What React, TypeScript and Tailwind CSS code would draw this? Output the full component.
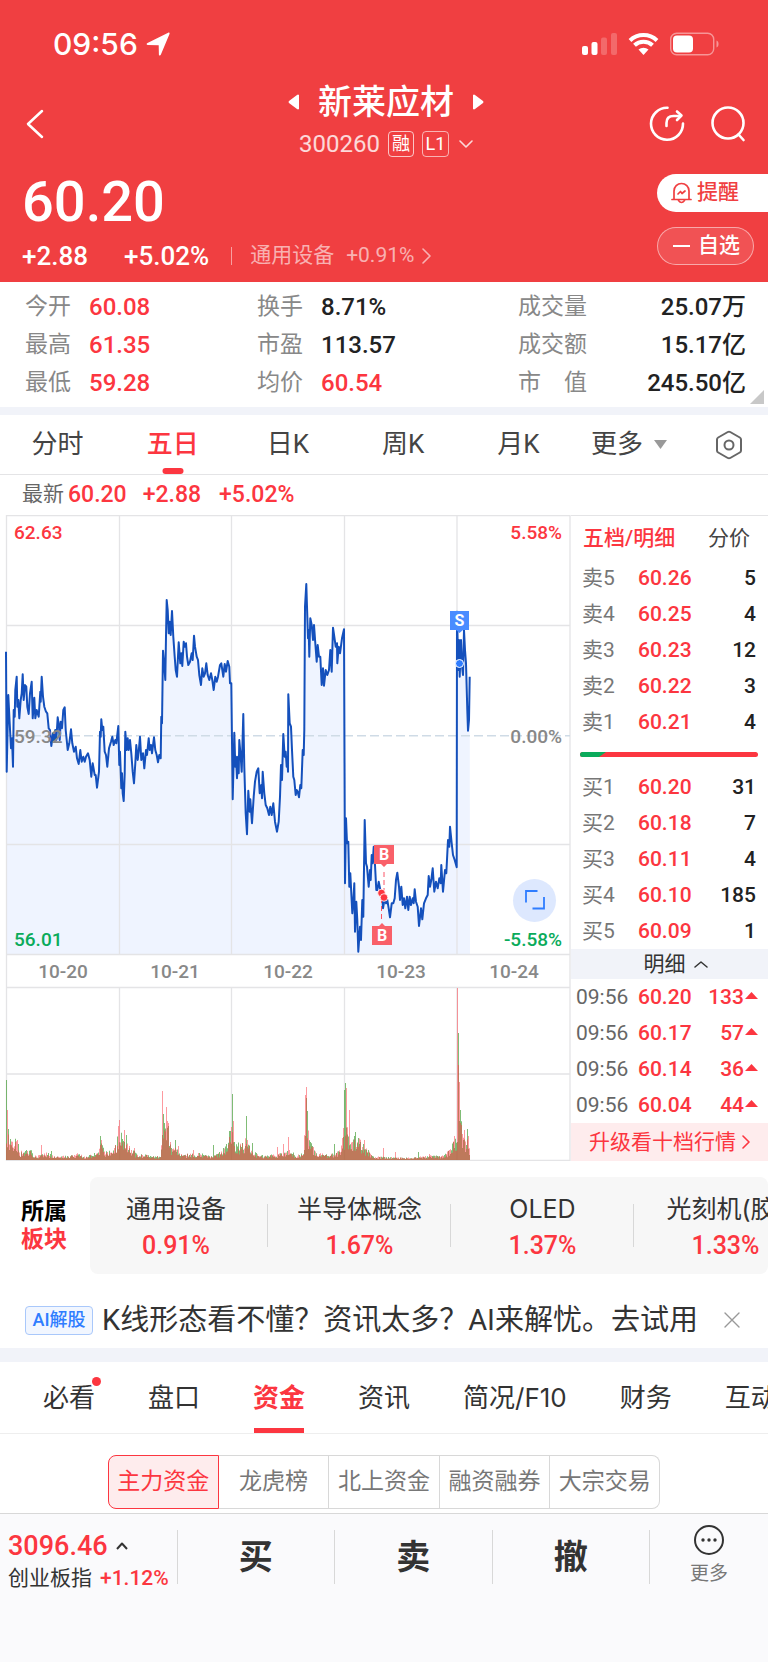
const klineTabs = ['分时', '五日', '日K', '周K', '月K'];

const stats = [
  [
    { label: '今开', value: '60.08', up: true },
    { label: '最高', value: '61.35', up: true },
    { label: '最低', value: '59.28', up: true },
  ],
  [
    { label: '换手', value: '8.71%', up: false },
    { label: '市盈', value: '113.57', up: false },
    { label: '均价', value: '60.54', up: true },
  ],
  [
    { label: '成交量', value: '25.07万', up: false },
    { label: '成交额', value: '15.17亿', up: false },
    { label: '市　值', value: '245.50亿', up: false },
  ],
];

const sells = [
  ['卖5', '60.26', '5'],
  ['卖4', '60.25', '4'],
  ['卖3', '60.23', '12'],
  ['卖2', '60.22', '3'],
  ['卖1', '60.21', '4'],
];

const buys = [
  ['买1', '60.20', '31'],
  ['买2', '60.18', '7'],
  ['买3', '60.11', '4'],
  ['买4', '60.10', '185'],
  ['买5', '60.09', '1'],
];

const deals = [
  ['09:56', '60.20', '133'],
  ['09:56', '60.17', '57'],
  ['09:56', '60.14', '36'],
  ['09:56', '60.04', '44'],
];

const sectors = [
  { name: '通用设备', change: '0.91%' },
  { name: '半导体概念', change: '1.67%' },
  { name: 'OLED', change: '1.37%' },
  { name: '光刻机(胶)', change: '1.33%' },
];

const infoTabs = ['必看', '盘口', '资金', '资讯', '简况/F10', '财务', '互动'];
const fundTabs = ['主力资金', '龙虎榜', '北上资金', '融资融券', '大宗交易'];

// 五日分时走勢，單位為 1/3 px
const trend =
  '18,425 20,785 25,555 29,640 33,715 36,685 39,770 41,600 44,620 46,540 50,500 52,590 55,570 58,625 62,570 65,550 68,493 71,570 75,525 79,530 82,590 86,612 90,550 95,515 98,625 103,563 106,625 110,600 116,620 121,545 122,575 125,500 129,560 133,590 138,605 142,610 146,655 150,660 154,708 159,670 162,690 166,660 169,690 173,622 177,650 179,690 182,635 186,655 190,600 194,592 197,660 203,720 208,700 213,658 217,700 222,725 227,710 231,745 236,762 241,720 245,755 250,740 254,755 258,740 264,730 269,750 274,800 278,760 284,795 287,795 291,833 297,785 300,665 302,680 304,628 307,660 310,650 314,725 318,735 322,770 327,715 333,695 337,680 341,705 346,690 349,700 355,648 358,765 360,725 364,835 366,790 368,850 371,873 374,790 376,665 380,720 383,685 386,720 390,690 394,730 398,785 402,820 406,760 409,705 413,750 416,725 420,680 424,750 429,730 433,775 438,720 441,735 446,685 449,720 453,705 456,730 462,682 466,720 470,735 474,757 478,735 482,745 484,620 486,640 489,422 493,470 496,510 498,380 500,270 503,300 506,370 509,335 512,375 516,303 520,380 524,440 527,480 531,500 536,397 541,460 544,430 547,468 551,395 554,410 558,400 561,440 565,465 570,455 575,430 578,450 582,377 585,410 590,440 594,450 598,495 603,525 607,475 611,500 615,490 619,460 623,495 628,510 633,490 637,510 641,540 646,500 650,515 654,500 660,465 664,460 670,500 674,462 678,485 683,453 688,470 690,520 694,520 698,868 703,668 706,770 708,740 711,805 714,740 716,790 718,690 722,740 725,785 730,612 733,770 737,910 741,973 745,842 749,905 751,868 756,940 761,860 765,815 770,785 775,775 779,850 784,825 786,865 788,785 793,850 797,885 802,895 807,915 811,890 815,915 820,880 825,935 831,965 836,935 840,860 843,765 846,810 850,672 854,740 857,725 860,770 862,740 864,785 865,553 869,640 873,650 876,720 880,800 883,810 887,855 890,840 893,845 897,862 901,825 904,835 908,720 911,735 913,660 915,290 919,222 921,290 924,385 926,360 928,440 931,325 935,345 939,390 942,345 946,400 950,455 953,405 957,440 961,440 965,525 969,475 972,527 977,480 982,495 987,480 991,420 995,485 999,353 1003,380 1007,410 1011,400 1012,460 1016,410 1020,430 1026,385 1032,358 1035,1120 1038,925 1041,1000 1045,995 1048,1130 1051,1090 1057,1210 1060,1175 1063,1120 1065,1265 1069,1175 1072,1230 1075,1325 1080,1250 1083,1290 1087,1170 1090,1220 1094,930 1098,1060 1101,1070 1106,1130 1110,1080 1112,1110 1115,1035 1118,1060 1121,1010 1125,1065 1129,1140 1132,1140 1136,1115 1142,1145 1146,1150 1149,1195 1155,1160 1158,1180 1162,1170 1166,1195 1170,1222 1175,1180 1180,1180 1184,1165 1188,1110 1192,1088 1197,1130 1200,1170 1204,1130 1208,1185 1212,1165 1216,1195 1221,1160 1225,1200 1229,1160 1233,1185 1238,1165 1241,1180 1244,1138 1248,1175 1253,1190 1257,1248 1263,1195 1267,1228 1272,1180 1278,1165 1283,1155 1286,1098 1290,1130 1294,1110 1298,1075 1303,1145 1308,1115 1313,1135 1318,1105 1322,1120 1324,1065 1329,1145 1335,1080 1339,1090 1344,990 1348,1010 1350,950 1355,1000 1359,1035 1364,1050 1370,1072 1371,305 1373,400 1375,480 1377,390 1379,500 1383,390 1386,470 1389,495 1392,360 1395,420 1398,460 1402,600 1404,662 1407,630 1409,500';

// 成交量輪廓 [x, 高度]
const volumeBase: [number, number][] = [
  [6, 30], [9, 24], [12, 16], [17, 20], [20, 8], [30, 9], [36, 4], [46, 7], [55, 3], [70, 4], [78, 6], [84, 3],
  [97, 7], [101, 20], [104, 8], [112, 9], [117, 20], [121, 24], [126, 20], [131, 9], [140, 5], [160, 3], [162, 25],
  [164, 36], [166, 20], [168, 34], [171, 12], [176, 12], [180, 5], [200, 6], [212, 3], [218, 6], [227, 14], [231, 30],
  [234, 20], [239, 14], [247, 20], [250, 9], [260, 4], [275, 5], [291, 9], [295, 4], [303, 6], [305, 50], [308, 28],
  [311, 14], [316, 6], [330, 5], [340, 9], [343, 20], [346, 40], [350, 18], [356, 22], [363, 14], [369, 7], [373, 3],
  [410, 2], [430, 4], [443, 4], [450, 10], [456, 22], [459, 50], [462, 26], [466, 18], [468, 20], [470, 6],
];

const volumeSpikes: [number, number, string][] = [
  [6, 80, 'g'], [7, 50, 'r'], [8, 26, 'g'], [41, 15, 'r'], [51, 9, 'g'], [100, 24, 'g'], [101, 20, 'r'],
  [118, 34, 'r'], [119, 40, 'r'], [124, 30, 'r'], [126, 25, 'g'], [134, 12, 'r'], [162, 69, 'r'], [163, 46, 'g'],
  [164, 37, 'g'], [166, 53, 'r'], [167, 39, 'r'], [168, 34, 'g'], [175, 20, 'g'], [178, 14, 'r'], [193, 10, 'r'],
  [213, 15, 'g'], [226, 16, 'g'], [229, 29, 'g'], [231, 33, 'r'], [232, 66, 'g'], [233, 39, 'r'], [246, 44, 'g'],
  [247, 20, 'r'], [252, 17, 'g'], [277, 13, 'r'], [283, 16, 'r'], [288, 23, 'r'], [305, 65, 'r'], [306, 73, 'r'],
  [306, 62, 'g'], [307, 49, 'g'], [308, 26, 'r'], [310, 18, 'g'], [313, 13, 'r'], [334, 16, 'g'], [342, 22, 'r'],
  [343, 32, 'r'], [344, 70, 'g'], [345, 77, 'g'], [346, 72, 'r'], [349, 50, 'r'], [355, 28, 'g'], [358, 22, 'g'],
  [364, 20, 'r'], [368, 10, 'g'], [383, 12, 'r'], [395, 8, 'r'], [418, 8, 'g'], [429, 6, 'r'], [454, 24, 'r'],
  [457, 172, 'r'], [458, 127, 'g'], [458, 95, 'r'], [459, 78, 'r'], [460, 50, 'g'], [461, 35, 'r'], [464, 30, 'r'],
  [467, 31, 'g'], [468, 24, 'r'],
];

const points = trend.split(' ').map((p) => {
  const [x, y] = p.split(',').map(Number);
  return `${(x / 3).toFixed(1)},${(510 + y / 3).toFixed(1)}`;
});

const noise = (n: number) => {
  const v = Math.sin(n * 127.1) * 43758.5453;
  return v - Math.floor(v);
};

const baseHeight = (x: number) => {
  const i = volumeBase.findIndex(([bx]) => bx > x);
  if (i < 1) return volumeBase[volumeBase.length - 1][1];
  const [x0, h0] = volumeBase[i - 1];
  const [x1, h1] = volumeBase[i];
  return h0 + ((h1 - h0) * (x - x0)) / (x1 - x0);
};

const volumePath = (color: string) => {
  const seed = color === 'r' ? 3 : 900;
  let d = '';
  for (let x = 6; x < 470; x++) {
    const h = Math.max(1, baseHeight(x) * (0.35 + 0.85 * noise(x + seed)));
    d += `M${x} 1160v-${h.toFixed(1)}h1V1160z`;
  }
  volumeSpikes.filter((s) => s[2] === color).forEach(([x, h]) => {
    d += `M${x} 1160v-${h}h1V1160z`;
  });
  return d;
};

function StatusBar() {
  return (
    <div className="flex items-center justify-between pl-[53px] pr-[49px] pt-7">
      <div className="flex items-center gap-2">
        <span className="font-['Inter','Liberation_Sans',sans-serif] text-[30px] font-medium leading-8">09:56</span>
        <svg className="h-6 w-6" viewBox="0 0 24 24" fill="currentColor">
          <path d="M22.2.7c.9-.5 1.7.2 1.3 1.2L14.8 22.700c-.5 1.200-1.900 1-1.900-.3l-.2-9.100-10.800-.4c-1.500-.1-1.700-1.400-.4-2z" />
        </svg>
      </div>
      <svg className="h-6 w-[137px]" viewBox="0 0 137 24" fill="none">
        <rect x="0" y="14" width="6" height="9" rx="2" fill="#fff" />
        <rect x="9.500" y="10" width="6" height="13" rx="2" fill="#fff" />
        <rect x="19" y="5.500" width="6" height="17.500" rx="2" fill="#fff" fillOpacity=".22" />
        <rect x="29" y="1" width="6" height="22" rx="2" fill="#fff" fillOpacity=".22" />
        <g stroke="#fff" strokeWidth="4">
          <path d="M48 8.500a19.500 19.500 0 0 1 27 0" />
          <path d="M52.500 13.300a13 13 0 0 1 18 0" />
        </g>
        <path d="M56.500 17.600a7.500 7.500 0 0 1 10 0l-5 5.400z" fill="#fff" />
        <rect x="88.700" y="1.200" width="43" height="21.500" rx="6" stroke="#fff" strokeOpacity=".45" strokeWidth="1.400" />
        <path d="M134.500 8.500c2.700.8 2.700 6.200 0 7z" fill="#fff" fillOpacity=".45" />
        <rect x="91" y="3.500" width="20" height="17" rx="4" fill="#fff" />
      </svg>
    </div>
  );
}

function Header() {
  return (
    <header className="bg-[#f03f41] pb-[10px] text-white">
      <StatusBar />
      <div className="grid grid-cols-[1fr_auto_1fr] items-center pl-[26px] pr-[22px] pt-[22px]">
        <button aria-label="返回" className="justify-self-start">
          <svg className="h-[30px] w-[18px]" viewBox="0 0 18 30" fill="none" stroke="currentColor" strokeWidth="2.500" strokeLinecap="round" strokeLinejoin="round">
            <path d="M16 2 2 15l14 13" />
          </svg>
        </button>
        <div className="flex flex-col items-center">
          <div className="flex items-center gap-[18px]">
            <button aria-label="上一只">
              <svg className="h-4 w-3" viewBox="0 0 12 16" fill="currentColor"><path d="M11 1v14q-1 .8-2 0L1 9Q0 8 1 7l8-6q1-.8 2 0z" /></svg>
            </button>
            <h1 className="text-[34px] font-medium leading-10">新莱应材</h1>
            <button aria-label="下一只">
              <svg className="h-4 w-3" viewBox="0 0 12 16" fill="currentColor"><path d="M1 1v14q1 .8 2 0l8-6q1-1 0-2L3 1Q2 .2 1 1z" /></svg>
            </button>
          </div>
          <div className="flex h-11 items-center gap-2 text-white/80">
            <span className="text-2xl">300260</span>
            <span className="flex h-[26px] w-[26px] items-center justify-center rounded border border-white/70 text-lg leading-none text-white">融</span>
            <span className="flex h-[26px] w-[27px] items-center justify-center rounded border border-white/60 text-lg leading-none text-white">L1</span>
            <button aria-label="展开" className="ml-0.5">
              <svg className="h-2 w-3.5" viewBox="0 0 14 8" fill="none" stroke="currentColor" strokeWidth="1.600" strokeLinecap="round" strokeLinejoin="round"><path d="m1 1 6 6 6-6" /></svg>
            </button>
          </div>
        </div>
        <div className="flex items-center gap-[25px] justify-self-end">
          <button aria-label="分享">
            <svg className="h-9 w-9" viewBox="0 0 36 36" fill="none" stroke="currentColor" strokeWidth="2.600" strokeLinecap="round" strokeLinejoin="round">
              <path d="M18.500 1.800A16 16 0 1 0 34 17.500" />
              <path d="M17.500 20v-3q0-7 7-7h6" />
              <path d="m28 5.500 4.500 4-4.500 4.500" />
            </svg>
          </button>
          <button aria-label="搜索">
            <svg className="h-9 w-9" viewBox="0 0 36 36" fill="none" stroke="currentColor" strokeWidth="2.600" strokeLinecap="round">
              <circle cx="18" cy="17" r="15.500" />
              <path d="m28.500 28.500 5 5.500" />
            </svg>
          </button>
        </div>
      </div>
      <div className="flex items-start justify-between pl-[22px]">
        <div>
          <div className="pt-1.5 text-[56px] font-medium leading-[60px]">60.20</div>
          <div className="mt-2 flex h-8 items-center text-[26px] font-medium">
            <span>+2.88</span>
            <span className="ml-9">+5.02%</span>
            <span className="ml-[22px] mr-[18px] h-[18px] w-px bg-white/50" />
            <a href="#sector" className="flex items-center gap-3 text-[21px] font-normal text-white/60">
              <span>通用设备</span>
              <span>+0.91%</span>
              <svg className="-ml-1 h-4 w-[9px]" viewBox="0 0 9 16" fill="none" stroke="currentColor" strokeWidth="1.600" strokeLinecap="round" strokeLinejoin="round"><path d="m1 1 7 7-7 7" /></svg>
            </a>
          </div>
        </div>
        <div className="flex w-[111px] flex-col gap-[15px] pt-2">
          <button className="flex h-[38px] items-center rounded-l-full bg-white pl-[14px] text-[21px] font-medium text-[#f03f41]">
            <svg className="mr-[5px] h-[22px] w-[21px]" viewBox="0 0 21 22" fill="none" stroke="currentColor" strokeWidth="1.700" strokeLinecap="round" strokeLinejoin="round">
              <path d="M1 17.500h19M3 17.500V9a7.500 7.500 0 0 1 15 0v8.500" />
              <path d="M7.500 18.500q3 4 6 0" />
              <path d="m7 12 2.500-2.500 1.500 2L14 9" />
            </svg>
            提醒
          </button>
          <button className="mr-[14px] flex h-[38px] items-center rounded-full border border-white/50 bg-white/10 pl-[15px] text-[21px] font-medium">
            <span className="mr-2 h-0.5 w-[17px] bg-white" />
            自选
          </button>
        </div>
      </div>
    </header>
  );
}

function PriceChart() {
  const area = `6,954 ${points.join(' ')} 470,954`;
  return (
    <div className="relative min-w-0 flex-1">
      <svg className="block w-full" viewBox="0 515 571 646" fontFamily="Roboto, sans-serif" fontWeight="500">
        <polygon points={area} fill="#eff4ff" />
        <g stroke="#e4e4e6" strokeWidth="1.300" fill="none">
          <path d="M6 515.500h564M6 625.500h564M6 844.500h564M6 954.500h564M6 987.500h564M6 1074h564M6 1160.400h564" />
          <path d="M6.500 515v646M119.500 515v439M231.500 515v439M344.500 515v439M457 515v439M119.500 987v173M231.500 987v173M344.500 987v173M457 987v173M570 515v646" />
        </g>
        <path d="M6 735.700h564" stroke="#cfdbe6" strokeWidth="1.500" strokeDasharray="9 4" />
        <polyline points={points.join(' ')} fill="none" stroke="#1450bc" strokeWidth="2" strokeLinejoin="round" />
        <path d={volumePath('g')} fill="#3c9a2c" fillOpacity=".65" />
        <path d={volumePath('r')} fill="#fc3640" fillOpacity=".5" />

        <g fontSize="19">
          <text x="14" y="539" fill="#fc3640">62.63</text>
          <text x="14" y="743" fill="#888">59.32</text>
          <text x="14" y="946" fill="#0aab5b">56.01</text>
          <text x="562" y="539" fill="#fc3640" textAnchor="end">5.58%</text>
          <text x="562" y="743" fill="#888" textAnchor="end">0.00%</text>
          <text x="562" y="946" fill="#0aab5b" textAnchor="end">-5.58%</text>
        </g>
        <g fontSize="19" fill="#888" textAnchor="middle">
          <text x="63" y="978">10-20</text>
          <text x="175" y="978">10-21</text>
          <text x="288" y="978">10-22</text>
          <text x="401" y="978">10-23</text>
          <text x="514" y="978">10-24</text>
        </g>

        <g stroke="#fb5566" strokeDasharray="5 3">
          <path d="M384 872v20M381.500 898v24" />
        </g>
        <g fill="#f96069">
          <path d="M374 845h20v19h-7l-3 3-3-3h-7zM372 945h20v-19h-7l-3-3-3 3h-7z" />
        </g>
        <g fill="#fc3640" stroke="#fff" strokeWidth=".8">
          <circle cx="381.500" cy="893" r="3.800" />
          <circle cx="384" cy="897.500" r="3.800" />
        </g>
        <path d="M450 611h19v19h-6l-3.500 3-3.500-3h-6z" fill="#4a8cff" />
        <circle cx="459.500" cy="663.500" r="4" fill="#2f7dff" stroke="#fff" strokeWidth="1" />
        <g fontSize="16" fontWeight="700" fill="#fff" textAnchor="middle">
          <text x="384" y="860">B</text>
          <text x="382" y="941">B</text>
          <text x="459.500" y="626">S</text>
        </g>
      </svg>
      <button aria-label="全屏" className="absolute bottom-[37%] right-[15px] flex h-[43px] w-[43px] items-center justify-center rounded-full bg-[#dde8fe]">
        <svg className="h-5 w-5" viewBox="0 0 20 20" fill="none" stroke="#2f7dff" strokeWidth="1.800">
          <path d="M1 12.500V1h11.500M7.500 18.500H19V7" />
        </svg>
      </button>
    </div>
  );
}

function QuoteRows({ rows }: { rows: string[][] }) {
  return (
    <table className="w-full table-fixed">
      <tbody>
        {rows.map(([level, price, amount]) => (
          <tr key={level} className="h-9">
            <td className="w-[56px] p-0 pl-[11px] text-[#777]">{level}</td>
            <td className="w-[70px] p-0 pl-[11px] font-medium text-[#fc3640]">{price}</td>
            <td className="p-0 pr-3 text-right font-medium text-[#222]">{amount}</td>
          </tr>
        ))}
      </tbody>
    </table>
  );
}

function OrderBook() {
  return (
    <aside className="w-[197px] shrink-0 border-t border-[#e4e4e6] text-[21px] leading-6">
      <div className="flex h-11 items-center justify-between pl-3 pr-[18px]">
        <button className="font-medium text-[#fc3640]">五档/明细</button>
        <button className="text-[#444]">分价</button>
      </div>
      <QuoteRows rows={sells} />
      <div className="flex h-[29px] items-center pl-[9px] pr-2.5">
        <div className="flex h-[5px] w-full overflow-hidden rounded-full bg-[#fc3640]">
          <svg className="h-full w-[26px]" viewBox="0 0 26 5" fill="#0aab5b"><path d="M0 0h26l-7 5H0z" /></svg>
        </div>
      </div>
      <QuoteRows rows={buys} />
      <button className="flex h-[30px] w-full items-center justify-center gap-2 bg-[#f1f3f9] pl-3 text-[#333]">
        明细
        <svg className="h-[7px] w-3.5" viewBox="0 0 14 7" fill="none" stroke="currentColor" strokeWidth="1.500" strokeLinecap="round" strokeLinejoin="round"><path d="m1 6 6-5 6 5" /></svg>
      </button>
      <table className="w-full table-fixed">
        <tbody>
          {deals.map(([time, price, amount]) => (
            <tr key={price} className="h-9">
              <td className="w-[58px] p-0 pl-[5px] text-[#666]">{time}</td>
              <td className="w-[68px] p-0 pl-[9px] font-medium text-[#fc3640]">{price}</td>
              <td className="p-0 pr-2.5 font-medium text-[#fc3640]">
                <div className="flex items-center justify-end gap-px">
                  {amount}
                  <svg className="mb-1 h-[7px] w-[13px]" viewBox="0 0 13 7" fill="currentColor"><path d="M6.500 0 13 7H0z" /></svg>
                </div>
              </td>
            </tr>
          ))}
        </tbody>
      </table>
      <a href="#level2" className="flex h-[38px] items-center justify-center gap-1.5 bg-[#feeced] text-[#fc3640]">
        升级看十档行情
        <svg className="h-3.5 w-2" viewBox="0 0 8 14" fill="none" stroke="currentColor" strokeWidth="1.600" strokeLinecap="round" strokeLinejoin="round"><path d="m1 1 6 6-6 6" /></svg>
      </a>
    </aside>
  );
}

export default function App() {
  return (
    <div className="w-full overflow-hidden bg-white font-['Roboto','Noto_Sans_CJK_SC',sans-serif] text-[#333]">
      <Header />

      <section className="relative grid grid-cols-[232fr_261fr_228fr] pb-[5px] pl-[25px] pr-[22px] pt-1.5">
        {stats.map((column, i) => (
          <dl key={i}>
            {column.map((item) => (
              <div key={item.label} className={`flex h-[38px] items-center text-2xl ${i === 2 ? 'justify-between' : 'gap-[18px]'}`}>
                <dt className="text-[23px] text-[#888]">{item.label}</dt>
                <dd className={`font-medium ${item.up ? 'text-[#fc3640]' : 'text-[#222]'}`}>{item.value}</dd>
              </div>
            ))}
          </dl>
        ))}
        <svg className="absolute bottom-[3px] right-1 h-3.5 w-3.5" viewBox="0 0 14 14" fill="#c8c8c8"><path d="M14 0v14H0z" /></svg>
      </section>

      <div className="h-2 bg-[#f1f3f9]" />

      <nav className="flex h-[60px] items-stretch border-b border-[#e4e4e6] text-[26px]">
        {klineTabs.map((tab) => (
          <button key={tab} className={`relative w-[15%] ${tab === '五日' ? 'font-medium text-[#fc3640]' : 'text-[#444]'}`}>
            {tab}
            {tab === '五日' && <span className="absolute bottom-0 left-1/2 h-1.5 w-[21px] -translate-x-1/2 rounded bg-[#fc3640]" />}
          </button>
        ))}
        <button className="ml-[15px] flex items-center gap-[11px] text-[#444]">
          更多
          <svg className="h-[9px] w-[13px]" viewBox="0 0 13 9" fill="#999"><path d="M0 0h13L6.500 9z" /></svg>
        </button>
        <button aria-label="设置" className="ml-auto mr-[25px] text-[#666]">
          <svg className="h-[30px] w-7" viewBox="0 0 28 30" fill="none" stroke="currentColor" strokeWidth="2" strokeLinejoin="round">
            <path d="M12.800 2 3.200 7.500Q2 8.200 2 9.500v11q0 1.300 1.200 2l9.600 5.500q1.200.7 2.400 0l9.600-5.500q1.200-.7 1.200-2v-11q0-1.300-1.200-2L15.200 2Q14 1.300 12.800 2z" />
            <circle cx="14" cy="15" r="4.500" />
          </svg>
        </button>
      </nav>

      <div className="flex h-10 items-center pl-[22px] text-[23px] text-[#fc3640]">
        <span className="mr-1 text-[21px] text-[#666]">最新</span>
        <span className="font-medium">60.20</span>
        <span className="ml-4 font-medium">+2.88</span>
        <span className="ml-[18px] font-medium">+5.02%</span>
      </div>

      <section className="flex">
        <PriceChart />
        <OrderBook />
      </section>

      <section id="sector" className="flex items-center pt-4">
        <h2 className="w-[90px] shrink-0 pl-[21px] text-[23px] font-bold leading-7 text-black">
          所属
          <span className="block text-[#fc3640]">板块</span>
        </h2>
        <div className="flex h-[97px] min-w-0 flex-1 overflow-hidden rounded-lg bg-[#f7f7f7]">
          {sectors.map((sector) => (
            <a
              key={sector.name}
              href="#sector"
              className="relative flex w-[183px] shrink-0 flex-col items-center pt-3.5 first:w-[178px] first:pr-1.5 after:absolute after:right-0 after:top-[27px] after:h-[43px] after:w-px after:bg-[#d8d8d8]"
            >
              <span className="whitespace-nowrap font-['Inter','Noto_Sans_CJK_SC',sans-serif] text-[25px] leading-9">{sector.name}</span>
              <span className="text-[25px] font-medium leading-[38px] text-[#fc3640]">{sector.change}</span>
            </a>
          ))}
        </div>
      </section>

      <section className="flex items-center pb-[9px] pl-[25px] pr-7 pt-[27px]">
        <span className="flex h-[29px] w-[68px] shrink-0 items-center justify-center rounded border border-[#a9c8fb] bg-[#f1f6ff] text-[18px] font-medium leading-none text-[#2f7dff]">AI解股</span>
        <a href="#ai" className="ml-[9px] whitespace-nowrap text-[29px] leading-[38px]">K线形态看不懂？资讯太多？AI来解忧。去试用</a>
        <button aria-label="关闭" className="ml-auto text-[#999]">
          <svg className="h-4 w-4" viewBox="0 0 16 16" fill="none" stroke="currentColor" strokeWidth="1.400" strokeLinecap="round"><path d="m1 1 14 14M15 1 1 15" /></svg>
        </button>
      </section>

      <div className="h-3.5 bg-[#f1f3f9]" />

      <nav className="flex h-[72px] gap-[53px] overflow-hidden border-b border-[#eee] pl-[43px] font-['Inter','Noto_Sans_CJK_SC',sans-serif] text-[26px]">
        {infoTabs.map((tab) => (
          <button key={tab} className={`relative shrink-0 ${tab === '资金' ? 'font-bold text-[#fc3640]' : ''}`}>
            {tab}
            {tab === '必看' && <span className="absolute -right-1.5 top-[15px] h-[9px] w-[9px] rounded-full bg-[#fc3640]" />}
            {tab === '资金' && <span className="absolute bottom-0 left-px h-[5px] w-[50px] bg-[#fc3640]" />}
          </button>
        ))}
      </nav>

      <div className="mx-auto mb-1 mt-[21px] flex h-[54px] w-[72%] text-[23px] text-[#777]">
        {fundTabs.map((tab) => (
          <button
            key={tab}
            className={`flex-1 whitespace-nowrap border-y border-r first:rounded-l-lg first:border-l last:rounded-r-lg ${
              tab === '主力资金' ? 'border-[#fc3640] bg-[#feeced] text-[#fc3640]' : 'border-[#d8d8d8]'
            }`}
          >
            {tab}
          </button>
        ))}
      </div>

      <footer className="flex border-t border-[#d8d8d8] bg-[#fafafc] pb-[77px] pt-4">
        <button className="flex w-[23%] flex-col justify-center pl-2 text-left">
          <span className="flex items-center gap-2 text-[27px] font-medium leading-8 text-[#fc3640]">
            3096.46
            <svg className="h-2 w-3" viewBox="0 0 12 8" fill="none" stroke="#333" strokeWidth="2" strokeLinejoin="round"><path d="m1 7 5-5.500L11 7" /></svg>
          </span>
          <span className="flex gap-2 whitespace-nowrap text-[21px] leading-8">
            创业板指 <span className="font-medium text-[#fc3640]">+1.12%</span>
          </span>
        </button>
        {['买', '卖', '撤'].map((action) => (
          <button key={action} className="h-[54px] flex-1 border-l border-[#d8d8d8] text-[34px] font-bold leading-[54px]">
            {action}
          </button>
        ))}
        <div className="h-[54px] w-px bg-[#d8d8d8]" />
        <button className="-mt-4 flex w-[118px] flex-col items-center pt-[10px] text-[19px] leading-7 text-[#777]">
          <svg className="mb-1 h-8 w-8" viewBox="0 0 32 32" fill="none" stroke="#333" strokeWidth="2">
            <circle cx="16" cy="16" r="14" />
            <g fill="#333" stroke="none">
              <circle cx="10" cy="16" r="1.700" />
              <circle cx="16" cy="16" r="1.700" />
              <circle cx="22" cy="16" r="1.700" />
            </g>
          </svg>
          更多
        </button>
      </footer>
    </div>
  );
}
